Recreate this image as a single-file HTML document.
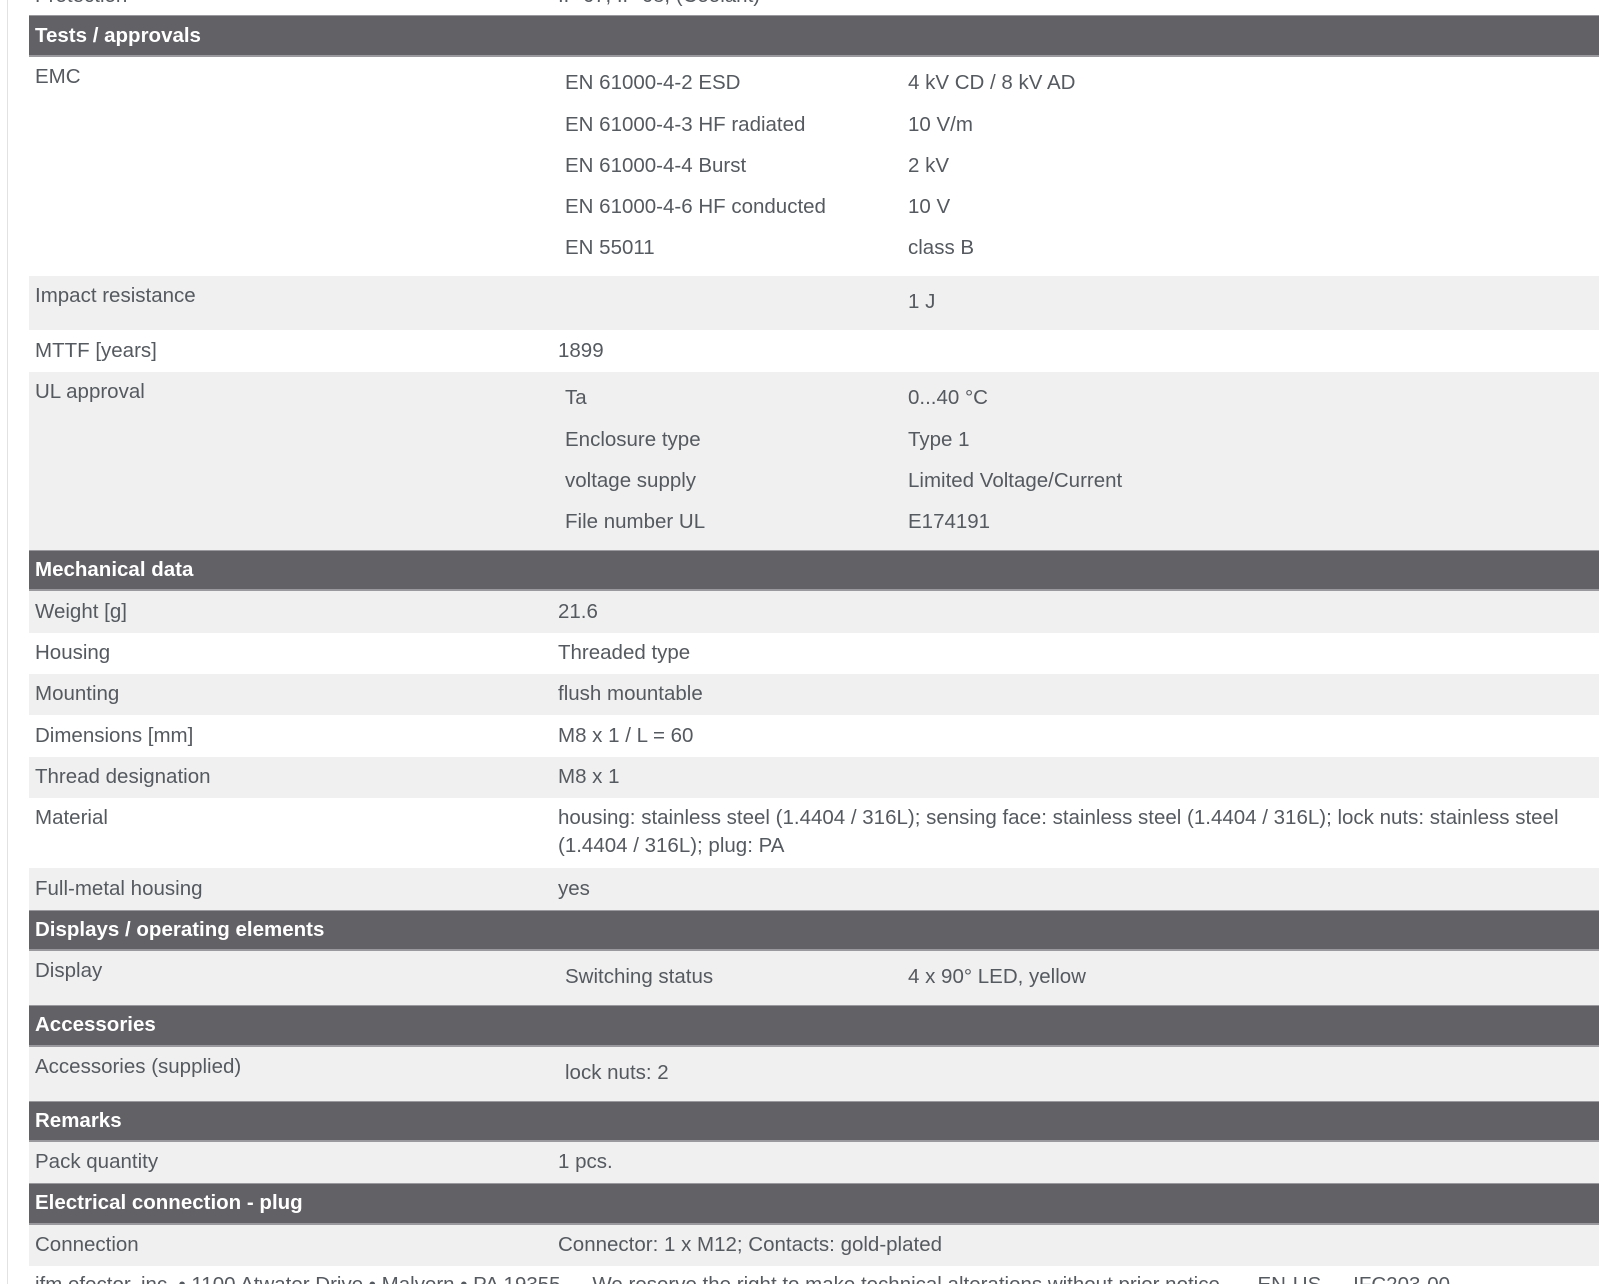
<!DOCTYPE html>
<html><head><meta charset="utf-8">
<style>
html,body{margin:0;padding:0;background:#fff;overflow:hidden;}
body{width:1600px;height:1284px;position:relative;overflow:hidden;font-family:"Liberation Sans",Arial,sans-serif;color:#555a60;font-size:20.5px;}
.r{position:absolute;left:29px;width:1570px;}
.g{background:#f0f0f0;}
.h{background:#616166;border-top:1px solid #9a9a9e;border-bottom:2px solid #9a9a9e;box-sizing:border-box;}
.t{position:absolute;line-height:24px;white-space:nowrap;}
.hb{color:#fff;font-weight:bold;}
.lb{position:absolute;left:7px;top:0;width:1px;height:1284px;background:#e2e2e2;}
</style></head><body>
<div class="lb"></div>
<div class="t" style="left:35px;top:-16px">Protection</div>
<div class="t" style="left:558px;top:-16px">IP 67; IP 68; (Coolant)</div>

<div class="r h" style="top:15px;height:42px"></div>
<div class="t hb" style="left:35px;top:24px">Tests / approvals</div>

<div class="t" style="left:35px;top:65px">EMC</div>
<div class="t" style="left:565px;top:71px">EN 61000-4-2 ESD</div><div class="t" style="left:908px;top:71px">4 kV CD / 8 kV AD</div>
<div class="t" style="left:565px;top:113px">EN 61000-4-3 HF radiated</div><div class="t" style="left:908px;top:113px">10 V/m</div>
<div class="t" style="left:565px;top:154px">EN 61000-4-4 Burst</div><div class="t" style="left:908px;top:154px">2 kV</div>
<div class="t" style="left:565px;top:195px">EN 61000-4-6 HF conducted</div><div class="t" style="left:908px;top:195px">10 V</div>
<div class="t" style="left:565px;top:236px">EN 55011</div><div class="t" style="left:908px;top:236px">class B</div>

<div class="r g" style="top:276px;height:54px"></div>
<div class="t" style="left:35px;top:284px">Impact resistance</div>
<div class="t" style="left:908px;top:290px">1 J</div>

<div class="t" style="left:35px;top:339px">MTTF [years]</div>
<div class="t" style="left:558px;top:339px">1899</div>

<div class="r g" style="top:372px;height:178px"></div>
<div class="t" style="left:35px;top:380px">UL approval</div>
<div class="t" style="left:565px;top:386px">Ta</div><div class="t" style="left:908px;top:386px">0...40 °C</div>
<div class="t" style="left:565px;top:428px">Enclosure type</div><div class="t" style="left:908px;top:428px">Type 1</div>
<div class="t" style="left:565px;top:469px">voltage supply</div><div class="t" style="left:908px;top:469px">Limited Voltage/Current</div>
<div class="t" style="left:565px;top:510px">File number UL</div><div class="t" style="left:908px;top:510px">E174191</div>

<div class="r h" style="top:550px;height:41px"></div>
<div class="t hb" style="left:35px;top:558px">Mechanical data</div>

<div class="r g" style="top:591px;height:42px"></div>
<div class="t" style="left:35px;top:600px">Weight [g]</div><div class="t" style="left:558px;top:600px">21.6</div>
<div class="t" style="left:35px;top:641px">Housing</div><div class="t" style="left:558px;top:641px">Threaded type</div>
<div class="r g" style="top:674px;height:41px"></div>
<div class="t" style="left:35px;top:682px">Mounting</div><div class="t" style="left:558px;top:682px">flush mountable</div>
<div class="t" style="left:35px;top:724px">Dimensions [mm]</div><div class="t" style="left:558px;top:724px">M8 x 1 / L = 60</div>
<div class="r g" style="top:757px;height:41px"></div>
<div class="t" style="left:35px;top:765px">Thread designation</div><div class="t" style="left:558px;top:765px">M8 x 1</div>
<div class="t" style="left:35px;top:806px">Material</div>
<div class="t" style="left:558px;top:806px">housing: stainless steel (1.4404 / 316L); sensing face: stainless steel (1.4404 / 316L); lock nuts: stainless steel</div>
<div class="t" style="left:558px;top:834px">(1.4404 / 316L); plug: PA</div>
<div class="r g" style="top:868px;height:42px"></div>
<div class="t" style="left:35px;top:877px">Full-metal housing</div><div class="t" style="left:558px;top:877px">yes</div>

<div class="r h" style="top:910px;height:41px"></div>
<div class="t hb" style="left:35px;top:918px">Displays / operating elements</div>
<div class="r g" style="top:951px;height:54px"></div>
<div class="t" style="left:35px;top:959px">Display</div>
<div class="t" style="left:565px;top:965px">Switching status</div><div class="t" style="left:908px;top:965px">4 x 90° LED, yellow</div>

<div class="r h" style="top:1005px;height:42px"></div>
<div class="t hb" style="left:35px;top:1013px">Accessories</div>
<div class="r g" style="top:1047px;height:54px"></div>
<div class="t" style="left:35px;top:1055px">Accessories (supplied)</div>
<div class="t" style="left:565px;top:1061px">lock nuts: 2</div>

<div class="r h" style="top:1101px;height:41px"></div>
<div class="t hb" style="left:35px;top:1109px">Remarks</div>
<div class="r g" style="top:1142px;height:41px"></div>
<div class="t" style="left:35px;top:1150px">Pack quantity</div><div class="t" style="left:558px;top:1150px">1 pcs.</div>

<div class="r h" style="top:1183px;height:42px"></div>
<div class="t hb" style="left:35px;top:1191px">Electrical connection - plug</div>
<div class="r g" style="top:1225px;height:41px"></div>
<div class="t" style="left:35px;top:1233px">Connection</div><div class="t" style="left:558px;top:1233px">Connector: 1 x M12; Contacts: gold-plated</div>

<div class="t" style="left:35px;top:1273px">ifm efector, inc. • 1100 Atwater Drive • Malvern • PA 19355 — We reserve the right to make technical alterations without prior notice. — EN-US — IFC203-00</div>
</body></html>
